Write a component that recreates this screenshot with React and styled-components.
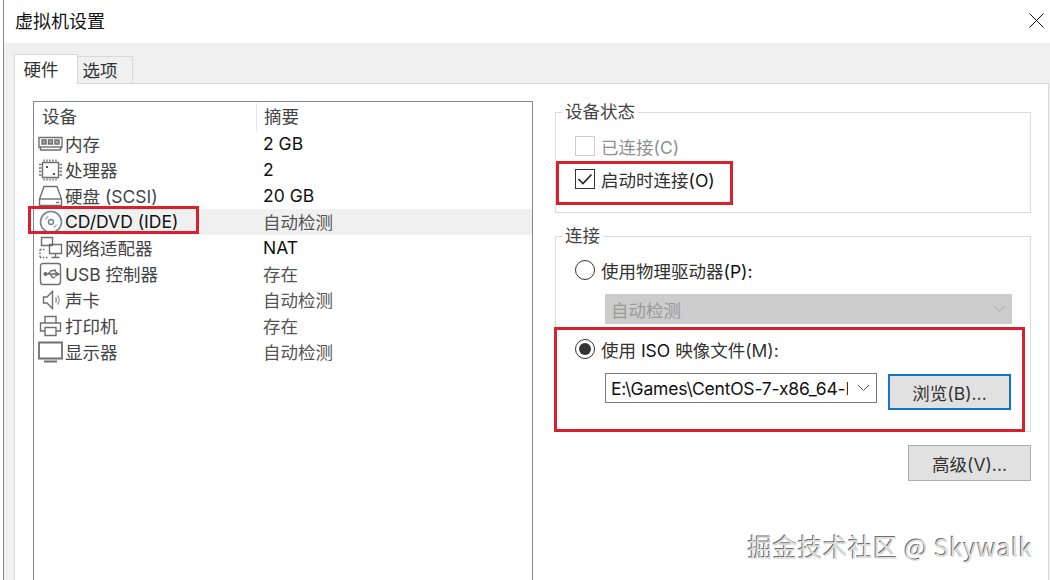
import React from "react";
import styled, { createGlobalStyle } from "styled-components";

const GlobalStyle = createGlobalStyle`
  html, body {
    margin: 0;
    padding: 0;
    background: #ffffff;
  }
  body {
    font-family: Inter, "Noto Sans CJK SC", sans-serif;
    font-size: 17.5px;
    color: #222222;
  }
`;

const Screen = styled.div`
  position: relative;
  display: flex;
  width: 1050px;
  height: 580px;
  padding-left: 3px;
  box-sizing: border-box;
  overflow: hidden;
  background: #ffffff;
`;

const Window = styled.div`
  flex: 1;
  display: flex;
  flex-direction: column;
  border-left: 1px solid #8a8a8a;
`;

const TitleBar = styled.div`
  flex: none;
  display: flex;
  align-items: center;
  justify-content: space-between;
  height: 43px;
  padding: 0 6px 3px 11px;
  box-sizing: border-box;
`;

const Title = styled.div`
  font-size: 18px;
  color: #111111;
`;

const CloseIcon = styled.svg`
  width: 15px;
  height: 15px;
`;

const Body = styled.div`
  flex: 1;
  display: flex;
  flex-direction: column;
  min-height: 0;
  padding: 0 1px 0 10px;
  background: #f0f0f0;
`;

const TabStrip = styled.div`
  flex: none;
  display: flex;
  align-items: flex-end;
  height: 41px;
  margin-bottom: -1px;
`;

const Tab = styled.div`
  display: flex;
  align-items: center;
  justify-content: center;
  box-sizing: border-box;
  position: relative;
  height: ${(props) => (props.$active ? "30px" : "28px")};
  width: ${(props) => (props.$active ? "64px" : "56px")};
  margin-left: ${(props) => (props.$active ? "0" : "-1px")};
  padding: 0 10px ${(props) => (props.$active ? "3px" : "2px")} 0;
  background: ${(props) => (props.$active ? "#ffffff" : "#f0f0f0")};
  border: 1px solid #d9d9d9;
  border-bottom: ${(props) => (props.$active ? "none" : "1px solid #d9d9d9")};
  color: #333333;
  z-index: ${(props) => (props.$active ? 1 : 0)};
`;

const Panel = styled.div`
  flex: 1;
  display: flex;
  min-height: 0;
  padding: 17px 0 0 18px;
  background: #ffffff;
  border-top: 1px solid #d9d9d9;
  border-left: 1px solid #d9d9d9;
  border-right: 1px solid #d9d9d9;
`;

const DeviceList = styled.div`
  position: relative;
  flex: none;
  width: 500px;
  height: 500px;
  box-sizing: border-box;
  border: 1px solid #828790;
`;

const ListHeader = styled.div`
  display: grid;
  grid-template-columns: 222px 1fr;
  height: 29px;
  align-items: center;
  color: #444444;
`;

const HeaderCell = styled.div`
  height: 28px;
  line-height: 28px;
  padding-left: ${(props) => props.$pad}px;
  border-left: ${(props) => (props.$divider ? "1px solid #e5e5e5" : "none")};
`;

const DeviceRow = styled.div`
  display: grid;
  grid-template-columns: 30px 192px 1fr;
  align-items: center;
  height: 26px;
`;

const IconCell = styled.div`
  display: flex;
  align-items: center;
  justify-content: center;
  height: 100%;
  padding-left: 3px;
`;

const NameCell = styled.div`
  display: flex;
  align-items: center;
  box-sizing: border-box;
  height: 100%;
  padding: 0 0 1px 1px;
  color: ${(props) => (props.$strong ? "#111111" : "#444444")};
  background: ${(props) => (props.$selected ? "#f0f0f0" : "transparent")};
  white-space: nowrap;
`;

const SummaryCell = styled.div`
  display: flex;
  align-items: center;
  box-sizing: border-box;
  height: 100%;
  padding: 0 0 1px 7px;
  color: ${(props) => (props.$strong ? "#111111" : "#555555")};
  background: ${(props) => (props.$selected ? "#f0f0f0" : "transparent")};
`;

const RightColumn = styled.div`
  position: relative;
  flex: none;
  display: flex;
  flex-direction: column;
  width: 476px;
  margin-left: 22px;
`;

const Group = styled.fieldset`
  margin: 0 0 ${(props) => props.$gap || 0}px;
  padding: 0 0 0 19px;
  height: ${(props) => props.$height}px;
  box-sizing: border-box;
  border: 1px solid #dcdcdc;
  min-width: 0;
`;

const Legend = styled.legend`
  margin-left: -13px;
  padding: 0 3px;
  line-height: 22px;
  color: #444444;
`;

const OptionRow = styled.div`
  display: flex;
  align-items: center;
  gap: 6px;
  height: 32px;
  margin-top: ${(props) => props.$top || 0}px;
  color: ${(props) => (props.$disabled ? "#8f8f8f" : "#333333")};
`;

const CheckBox = styled.div`
  display: flex;
  align-items: center;
  justify-content: center;
  width: 20px;
  height: 20px;
  box-sizing: border-box;
  border: 1px solid ${(props) => (props.$disabled ? "#cccccc" : "#333333")};
`;

const Radio = styled.div`
  display: flex;
  align-items: center;
  justify-content: center;
  width: 20px;
  height: 20px;
  box-sizing: border-box;
  border: 1px solid #333333;
  border-radius: 50%;
`;

const RadioDot = styled.div`
  width: 12px;
  height: 12px;
  border-radius: 50%;
  background: #333333;
`;

const Dark = styled.span`
  color: #111111;
`;

const DisabledSelect = styled.div`
  display: flex;
  align-items: center;
  justify-content: space-between;
  width: 407px;
  height: 30px;
  margin: 8px 0 0 30px;
  padding: 0 6px;
  box-sizing: border-box;
  background: #cccccc;
  color: #9a9a9a;
`;

const FileRow = styled.div`
  display: flex;
  align-items: flex-start;
  gap: 11px;
  margin: 8px 0 0 30px;
`;

const Combo = styled.div`
  display: flex;
  align-items: center;
  justify-content: space-between;
  width: 272px;
  height: 30px;
  padding: 0 6px 0 5px;
  box-sizing: border-box;
  border: 1px solid #7a7a7a;
  color: #111111;
`;

const ComboText = styled.div`
  width: 237px;
  overflow: hidden;
  white-space: nowrap;
  letter-spacing: -0.2px;
`;

const Button = styled.div`
  display: flex;
  align-items: center;
  justify-content: center;
  width: 123px;
  height: 36px;
  margin-top: ${(props) => (props.$focused ? "1px" : "0")};
  box-sizing: border-box;
  background: #e1e1e1;
  border: ${(props) => (props.$focused ? "2px solid #0c78c8" : "1px solid #adadad")};
  color: #333333;
`;

const ButtonRow = styled.div`
  display: flex;
  justify-content: flex-end;
  margin-top: 13px;
`;

const RedBox = styled.div`
  position: absolute;
  top: ${(props) => props.$top}px;
  left: ${(props) => props.$left}px;
  width: ${(props) => props.$width}px;
  height: ${(props) => props.$height}px;
  box-sizing: border-box;
  border: 3px solid #d9202c;
  pointer-events: none;
`;

const Watermark = styled.div`
  position: absolute;
  right: 17px;
  bottom: 16px;
  font-family: "Noto Sans CJK SC", "Noto Sans", sans-serif;
  font-size: 24.5px;
  letter-spacing: 0.6px;
  line-height: 34px;
  color: #dddddd;
  text-shadow: -1px -1px 0 #6f6f6f;
  white-space: nowrap;
`;

const Icon = styled.svg`
  width: 27px;
  height: 24px;
  fill: none;
  stroke: #6f6f6f;
  stroke-width: 1.4;
`;

const MemoryIcon = () => (
  <Icon viewBox="0 0 27 24">
    <path d="M2 5.500h23v10h-1.500v2.500h-20v-2.500H2z" />
    <path d="M5 8h4v4H5zM11.500 8h4v4h-4zM18 8h4v4h-4z" fill="#a8a8a8" />
    <path d="M3 15h21" />
  </Icon>
);

const CpuIcon = () => (
  <Icon viewBox="0 0 27 24">
    <path d="M5.500 4.500h16v15h-16z" />
    <path d="M9 8h2v2H9zM16 15h2v2h-2z" fill="#555555" stroke="none" />
    <path d="M7 1.500v2M10 1.500v2M13 1.500v2M16 1.500v2M19 1.500v2M7 20.500v2M10 20.500v2M13 20.500v2M16 20.500v2M19 20.500v2M2 6.500h2.500M2 10h2.500M2 13.500h2.500M2 17h2.500M22.500 6.500H25M22.500 10H25M22.500 13.500H25M22.500 17H25" />
  </Icon>
);

const DiskIcon = () => (
  <Icon viewBox="0 0 27 24">
    <path d="M7 2.500h13l4.500 12.500v6.500h-22V15z" />
    <path d="M2.500 15h22" />
    <path d="M19 18.500h3" />
  </Icon>
);

const CdIcon = () => (
  <Icon viewBox="0 0 27 24">
    <circle cx="14" cy="12" r="10.500" stroke="#71849c" strokeWidth="1.600" />
    <circle cx="14" cy="12" r="2.500" stroke="#71849c" />
    <path d="M8.500 9.500a6 6 0 0 1 3-3M19.500 14.500a6 6 0 0 1-3 3" stroke="#a5b1c0" />
  </Icon>
);

const NetworkIcon = () => (
  <Icon viewBox="0 0 27 24">
    <path d="M4.500 1.500h11v8h-11zM12.500 8.500h12v9h-12z" fill="#ffffff" />
    <path d="M18.500 17.500v3.500M14.500 21.500h8" />
    <path d="M3 13.500h6M3 13.500v8M3 21.500h8" strokeDasharray="1.500 1.500" />
  </Icon>
);

const UsbIcon = () => (
  <Icon viewBox="0 0 27 24">
    <rect x="3.500" y="1.500" width="20" height="21" rx="2.500" />
    <path d="M8 12h13M11 12l3.500-3.500h2.500M13 12l2.500 3.500H18" />
    <path d="M22 12l-3-1.800v3.600z" fill="#6f6f6f" />
    <circle cx="8.500" cy="12" r="1.400" fill="#6f6f6f" />
    <rect x="17" y="7.500" width="2" height="2" fill="#6f6f6f" stroke="none" />
  </Icon>
);

const SpeakerIcon = () => (
  <Icon viewBox="0 0 27 24">
    <path d="M6.500 9h3.500l5.500-5.500v17L10 15H6.500z" />
    <path d="M18.500 9.500a4 4 0 0 1 0 5M20.500 7.500a7 7 0 0 1 0 9" stroke="#9a9a9a" />
  </Icon>
);

const PrinterIcon = () => (
  <Icon viewBox="0 0 27 24">
    <path d="M8 9V2.500h11V9" />
    <path d="M8 17H3.500V9h20v8H19" />
    <path d="M8 13.500h11v8H8z" />
  </Icon>
);

const MonitorIcon = () => (
  <Icon viewBox="0 0 27 24">
    <path d="M2 2.500h23v16H2z" strokeWidth="1.800" />
    <path d="M7 21.500h13" strokeWidth="2" />
  </Icon>
);

const Chevron = ({ color }) => (
  <svg width="13" height="8" viewBox="0 0 13 8" fill="none" stroke={color}>
    <path d="M1 1l5.500 5.500L12 1" />
  </svg>
);

const devices = [
  { name: "内存", summary: "2 GB", icon: MemoryIcon, dark: true },
  { name: "处理器", summary: "2", icon: CpuIcon, dark: true },
  { name: "硬盘 (SCSI)", summary: "20 GB", icon: DiskIcon, dark: true },
  { name: "CD/DVD (IDE)", summary: "自动检测", icon: CdIcon, selected: true, strong: true },
  { name: "网络适配器", summary: "NAT", icon: NetworkIcon, dark: true },
  { name: "USB 控制器", summary: "存在", icon: UsbIcon },
  { name: "声卡", summary: "自动检测", icon: SpeakerIcon },
  { name: "打印机", summary: "存在", icon: PrinterIcon },
  { name: "显示器", summary: "自动检测", icon: MonitorIcon },
];

export default function App() {
  return (
    <>
      <GlobalStyle />
      <Screen>
        <Window>
          <TitleBar>
            <Title>虚拟机设置</Title>
            <CloseIcon viewBox="0 0 15 15" fill="none" stroke="#111111">
              <path d="M0.500 0.500l14 14M14.500 0.500l-14 14" />
            </CloseIcon>
          </TitleBar>
          <Body>
            <TabStrip>
              <Tab $active>硬件</Tab>
              <Tab>选项</Tab>
            </TabStrip>
            <Panel>
              <DeviceList>
                <ListHeader>
                  <HeaderCell $pad={8}>设备</HeaderCell>
                  <HeaderCell $pad={7} $divider>摘要</HeaderCell>
                </ListHeader>
                {devices.map((device) => (
                  <DeviceRow key={device.name}>
                    <IconCell>
                      <device.icon />
                    </IconCell>
                    <NameCell $selected={device.selected} $strong={device.strong}>
                      {device.name}
                    </NameCell>
                    <SummaryCell $selected={device.selected} $strong={device.dark}>
                      {device.summary}
                    </SummaryCell>
                  </DeviceRow>
                ))}
                <RedBox $top={104} $left={-6} $width={171} $height={28} />
              </DeviceList>
              <RightColumn>
                <Group $height={112} $gap={12}>
                  <Legend>设备状态</Legend>
                  <OptionRow $disabled $top={7}>
                    <CheckBox $disabled />
                    <span>已连接(C)</span>
                  </OptionRow>
                  <OptionRow $top={1}>
                    <CheckBox>
                      <svg width="16" height="12" viewBox="0 0 16 12" fill="none" stroke="#222222" strokeWidth="1.600">
                        <path d="M1.500 6l4.500 4.500L14.500 1.500" />
                      </svg>
                    </CheckBox>
                    <span>启动时连接<Dark>(O)</Dark></span>
                  </OptionRow>
                </Group>
                <Group $height={207}>
                  <Legend>连接</Legend>
                  <OptionRow $top={7}>
                    <Radio />
                    <span>使用物理驱动器<Dark>(P):</Dark></span>
                  </OptionRow>
                  <DisabledSelect>
                    自动检测
                    <Chevron color="#a8a8a8" />
                  </DisabledSelect>
                  <OptionRow $top={9}>
                    <Radio>
                      <RadioDot />
                    </Radio>
                    <span>使用 <Dark>ISO</Dark> 映像文件(M):</span>
                  </OptionRow>
                  <FileRow>
                    <Combo>
                      <ComboText>E:\Games\CentOS-7-x86_64-D</ComboText>
                      <Chevron color="#555555" />
                    </Combo>
                    <Button $focused>浏览(B)...</Button>
                  </FileRow>
                </Group>
                <ButtonRow>
                  <Button>高级(V)...</Button>
                </ButtonRow>
                <RedBox $top={60} $left={1} $width={177} $height={44} />
                <RedBox $top={226} $left={-1} $width={471} $height={105} />
              </RightColumn>
            </Panel>
          </Body>
        </Window>
        <Watermark>掘金技术社区 @ Skywalk</Watermark>
      </Screen>
    </>
  );
}
